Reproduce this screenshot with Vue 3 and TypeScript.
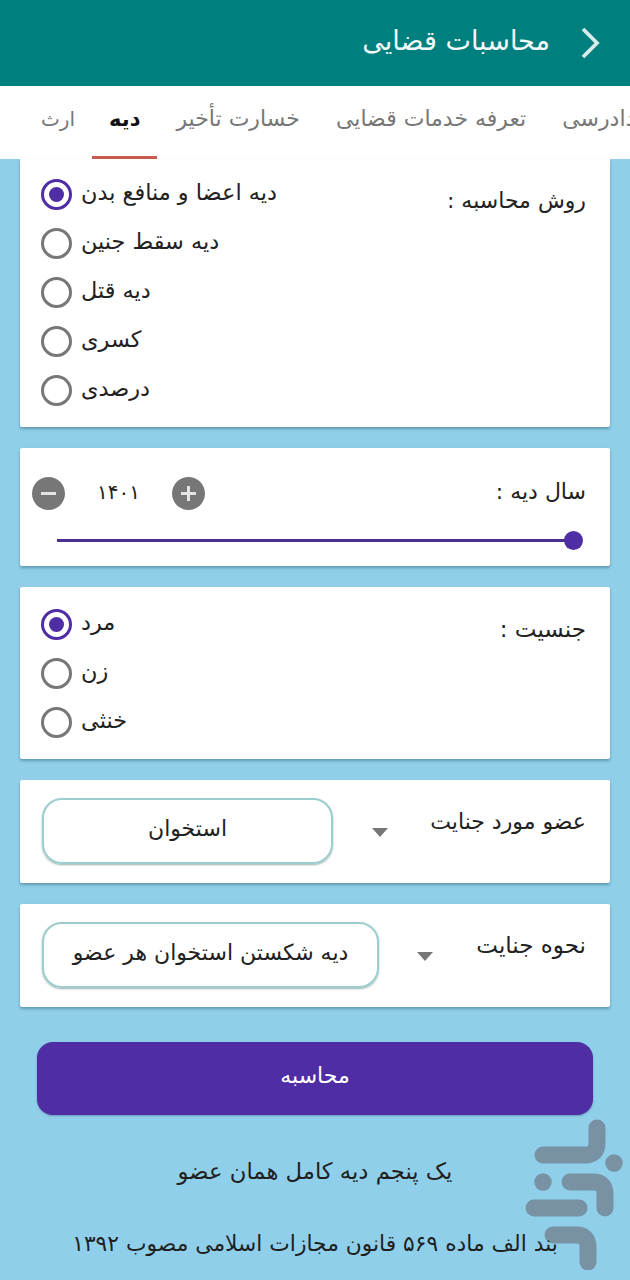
<script setup lang="ts">
const tabs = [
  { label: 'ارث', active: false },
  { label: 'دیه', active: true },
  { label: 'خسارت تأخیر', active: false },
  { label: 'تعرفه خدمات قضایی', active: false },
  { label: 'دادرسی', active: false },
]
const methods = [
  { label: 'دیه اعضا و منافع بدن', on: true },
  { label: 'دیه سقط جنین', on: false },
  { label: 'دیه قتل', on: false },
  { label: 'کسری', on: false },
  { label: 'درصدی', on: false },
]
const genders = [
  { label: 'مرد', on: true },
  { label: 'زن', on: false },
  { label: 'خنثی', on: false },
]
</script>

<template>
  <div class="page">
    <header class="appbar">
      <h1 class="title">محاسبات قضایی</h1>
      <svg class="back" width="22" height="34" viewBox="0 0 22 34" aria-hidden="true">
        <path d="M4 3 L18 17 L4 31" fill="none" stroke="#d6ecea" stroke-width="3.8" />
      </svg>
    </header>

    <nav class="tabs">
      <div v-for="t in tabs" :key="t.label" class="tab" :class="{ active: t.active }">{{ t.label }}</div>
    </nav>

    <main class="content">
      <section class="card radios-card first">
        <div class="radios">
          <div v-for="m in methods" :key="m.label" class="radio-row">
            <span class="radio" :class="{ on: m.on }"></span>
            <span class="radio-text">{{ m.label }}</span>
          </div>
        </div>
        <div class="label method-label">روش محاسبه :</div>
      </section>

      <section class="card year-card">
        <div class="year-row">
          <div class="stepper">
            <span class="step">
              <svg width="33" height="33" viewBox="0 0 33 33" aria-hidden="true">
                <circle cx="16.5" cy="16.5" r="16.5" fill="#777" />
                <path d="M9 16.5 H24" stroke="#e4e4e4" stroke-width="3" />
              </svg>
            </span>
            <span class="year">۱۴۰۱</span>
            <span class="step">
              <svg width="33" height="33" viewBox="0 0 33 33" aria-hidden="true">
                <circle cx="16.5" cy="16.5" r="16.5" fill="#777" />
                <path d="M9 16.5 H24 M16.5 9 V24" stroke="#e4e4e4" stroke-width="3" />
              </svg>
            </span>
          </div>
          <div class="label year-label">سال دیه :</div>
        </div>
        <div class="slider"><span class="thumb"></span></div>
      </section>

      <section class="card radios-card gender">
        <div class="radios">
          <div v-for="g in genders" :key="g.label" class="radio-row">
            <span class="radio" :class="{ on: g.on }"></span>
            <span class="radio-text">{{ g.label }}</span>
          </div>
        </div>
        <div class="label gender-label">جنسیت :</div>
      </section>

      <section class="card select-card">
        <div class="select organ">استخوان</div>
        <span class="caret organ-caret"></span>
        <div class="label select-label organ-label">عضو مورد جنایت</div>
      </section>

      <section class="card select-card">
        <div class="select manner">دیه شکستن استخوان هر عضو</div>
        <span class="caret manner-caret"></span>
        <div class="label select-label manner-label">نحوه جنایت</div>
      </section>

      <button class="calc" type="button">محاسبه</button>

      <p class="result">یک پنجم دیه کامل همان عضو</p>
      <p class="law">بند الف ماده ۵۶۹ قانون مجازات اسلامی مصوب ۱۳۹۲</p>
    </main>

    <svg class="watermark" width="110" height="160" viewBox="0 0 110 160" aria-hidden="true">
      <g fill="none" stroke="#7892a4" stroke-width="17" stroke-linecap="round" stroke-linejoin="round">
        <path d="M77 18 V33 Q77 45 65 45 H23" />
        <path d="M50 72 H73 Q85 72 85 84 V98" />
        <path d="M14 98 H59" />
        <path d="M33 125 H56 Q68 125 68 137 V152" />
      </g>
      <circle cx="94" cy="53" r="8.7" fill="#7892a4" />
      <circle cx="23" cy="72" r="8.7" fill="#7892a4" />
    </svg>
  </div>
</template>

<style>
html, body { margin: 0; padding: 0; }
</style>

<style scoped>
.page {
  position: relative;
  width: 630px;
  height: 1280px;
  overflow: hidden;
  background: #8fcfe9;
  font-family: "DejaVu Sans", "Noto Sans", sans-serif;
  color: #222;
}
.appbar {
  height: 86px;
  background: #007f7f;
  display: flex;
  justify-content: flex-end;
  align-items: center;
  gap: 29px;
  padding-right: 29px;
  box-sizing: border-box;
}
.title {
  margin: 0 0 6px;
  font-size: 27px;
  font-weight: 400;
  color: #f2fafa;
  direction: rtl;
}
.tabs {
  height: 73px;
  background: #fff;
  display: flex;
  padding-left: 24px;
  overflow: hidden;
  white-space: nowrap;
  gap: 2px;
}
.tab {
  flex: none;
  position: relative;
  padding: 0 17px;
  line-height: 66px;
  font-size: 22px;
  color: #777;
  direction: rtl;
}
.tab:first-child { font-size: 20px; padding-right: 15px; }
.tab.active { color: #111; font-weight: 700; font-size: 21px; }
.tab.active::after {
  content: "";
  position: absolute;
  left: 0;
  right: 0;
  bottom: 0;
  height: 3px;
  background: #cb5a50;
}
.content {
  position: relative;
  z-index: 1;
  display: flex;
  flex-direction: column;
  padding: 0 20px;
}
.card {
  background: #fff;
  box-shadow: 0 2px 3px rgba(40, 90, 110, 0.45);
  border-radius: 2px;
  margin-bottom: 21px;
  position: relative;
}
.radios-card {
  display: flex;
  justify-content: space-between;
  padding: 22px 24px 3px 21px;
}
.radios-card.first { padding-top: 20px; border-radius: 0 0 2px 2px; }
.radio-row {
  display: flex;
  align-items: center;
  gap: 9px;
  height: 30px;
  margin-bottom: 19px;
}
.radio {
  box-sizing: border-box;
  width: 31px;
  height: 31px;
  border-radius: 50%;
  border: 3px solid #777;
  display: flex;
  align-items: center;
  justify-content: center;
  flex: none;
}
.radio.on { border-color: #4f2da5; }
.radio.on::after {
  content: "";
  width: 15px;
  height: 15px;
  border-radius: 50%;
  background: #4f2da5;
}
.radio-text {
  direction: rtl;
  font-size: 22.4px;
  line-height: 26px;
  margin-top: -4px;
  color: #222;
}
.label {
  direction: rtl;
  font-size: 22px;
  line-height: 28px;
  color: #222;
}
.method-label { margin-top: 8px; }
.gender-label { margin-top: 6px; font-size: 23px; }
.year-label { margin-top: -4px; }
.year-card {
  height: 118px;
  padding: 29px 24px 0 12px;
  box-sizing: border-box;
}
.year-row {
  display: flex;
  justify-content: space-between;
  align-items: center;
  height: 33px;
}
.stepper {
  display: flex;
  align-items: center;
  width: 173px;
  justify-content: space-between;
}
.step { display: flex; width: 33px; height: 33px; }
.year { font-size: 20px; color: #222; margin-top: -4px; }
.slider {
  position: relative;
  margin: 29px 0 0 25px;
  width: 516px;
  height: 3px;
  background: #4b2e91;
}
.thumb {
  position: absolute;
  right: -10px;
  top: -8px;
  width: 19px;
  height: 19px;
  border-radius: 50%;
  background: #4f2da5;
}
.select-card {
  height: 103px;
  box-sizing: border-box;
  padding: 18px 24px 0 22px;
  display: flex;
  align-items: flex-start;
}
.select {
  box-sizing: border-box;
  height: 66px;
  border: 2px solid #9ccccc;
  border-radius: 20px;
  box-shadow: 0 1px 2px rgba(60, 100, 100, 0.5);
  display: flex;
  align-items: center;
  justify-content: center;
  direction: rtl;
  font-size: 22px;
  padding-bottom: 5px;
  color: #222;
  white-space: nowrap;
}
.organ { width: 291px; }
.manner { width: 337px; }
.caret {
  margin-top: 30px;
  width: 0;
  height: 0;
  border-left: 8px solid transparent;
  border-right: 8px solid transparent;
  border-top: 9px solid #777;
}
.organ-caret { margin-left: 39px; }
.manner-caret { margin-left: 38px; }
.select-label { margin-left: auto; margin-top: 8px; }
.organ-label { margin-top: 10px; }
.manner-label { font-size: 23px; margin-top: 9px; }
.calc {
  margin: 14px 17px 0;
  height: 73px;
  border: none;
  border-radius: 16px;
  background: #4f2da5;
  color: #fff;
  font-family: inherit;
  font-size: 22px;
  padding-bottom: 8px;
  box-shadow: 0 1px 2px rgba(40, 60, 110, 0.4);
  direction: rtl;
}
.result, .law {
  margin: 0;
  text-align: center;
  direction: rtl;
  color: #1f1f1f;
  white-space: nowrap;
}
.result { font-size: 22.7px; line-height: 30px; margin-top: 41px; }
.law { font-size: 21.8px; line-height: 30px; margin-top: 43px; }
.watermark {
  position: absolute;
  left: 520px;
  top: 1110px;
  z-index: 0;
}
</style>
